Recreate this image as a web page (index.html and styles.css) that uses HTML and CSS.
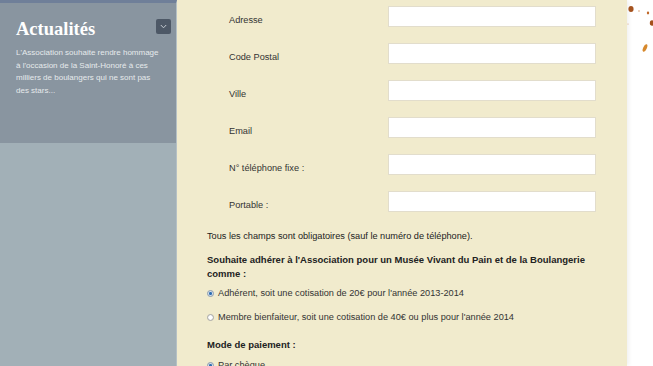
FILE: index.html
```html
<!DOCTYPE html>
<html lang="fr">
<head>
    <meta charset="UTF-8">
    <title>Adhésion - Musée Vivant du Pain</title>
    <link rel="stylesheet" href="styles.css">
</head>
<body>

<div class="page">
    <aside class="sidebar">
        <div class="news">
            <div class="news-head">
                <h2>Actualités</h2>
                <span class="toggle">
                    <svg width="7" height="5" viewBox="0 0 7 5"><path d="M0.8 1 L3.5 3.8 L6.2 1" fill="none" stroke="#c4cad1" stroke-width="1"/></svg>
                </span>
            </div>
            <p>L'Association souhaite rendre hommage à l'occasion de la Saint-Honoré à ces milliers de boulangers qui ne sont pas des stars...</p>
        </div>
    </aside>

    <div class="main">
        <div class="form-row"><label for="adresse">Adresse</label><input type="text" id="adresse"></div>
        <div class="form-row"><label for="cp">Code Postal</label><input type="text" id="cp"></div>
        <div class="form-row"><label for="ville">Ville</label><input type="text" id="ville"></div>
        <div class="form-row"><label for="email">Email</label><input type="text" id="email"></div>
        <div class="form-row"><label for="fixe">N° téléphone fixe :</label><input type="text" id="fixe"></div>
        <div class="form-row"><label for="portable">Portable :</label><input type="text" id="portable"></div>

        <p class="note">Tous les champs sont obligatoires (sauf le numéro de téléphone).</p>

        <p class="question">Souhaite adhérer à l'Association pour un Musée Vivant du Pain et de la Boulangerie comme :</p>
        <label class="choice"><input type="radio" name="type" checked> Adhérent, soit une cotisation de 20€ pour l'année 2013-2014</label>
        <label class="choice"><input type="radio" name="type"> Membre bienfaiteur, soit une cotisation de 40€ ou plus pour l'année 2014</label>

        <p class="question">Mode de paiement :</p>
        <label class="choice"><input type="radio" name="pay" checked> Par chèque</label>
    </div>

    <div class="backdrop">
        <svg width="26" height="60" viewBox="0 0 26 60">
            <ellipse cx="4" cy="9" rx="2.6" ry="3" fill="#a5531f"/>
            <ellipse cx="12" cy="11" rx="0.7" ry="0.7" fill="#d08a55"/>
            <ellipse cx="21" cy="13" rx="1.2" ry="1.4" fill="#c0692a"/>
            <ellipse cx="25" cy="23" rx="2.2" ry="2.8" fill="#a4501c"/>
            <ellipse cx="1" cy="24" rx="0.6" ry="0.6" fill="#d8a07a"/>
            <ellipse cx="18" cy="48" rx="1.8" ry="4" transform="rotate(25 18 48)" fill="#d7892d"/>
        </svg>
    </div>
</div>

</body>
</html>
```

FILE: styles.css
```css
body {
    margin: 0;
    font-family: "Liberation Sans", Arial, sans-serif;
    background-color: #fff;
}
.page {
    display: flex;
    height: 366px;
    overflow: hidden;
}
.sidebar {
    width: 176px;
    flex-shrink: 0;
    background-color: #a2b0b7;
    border-top: 3px solid #6f7f99;
    border-right: 1px solid #b6c1c6;
}
.news {
    background-color: #8995a0;
    height: 140px;
    padding: 16px 5px 0 16px;
    box-sizing: border-box;
}
.news-head {
    display: flex;
    justify-content: space-between;
    align-items: flex-start;
}
.news h2 {
    margin: 0;
    font-family: "Liberation Serif", "Times New Roman", serif;
    font-size: 18.5px;
    font-weight: bold;
    color: #fff;
    line-height: 21px;
}
.toggle {
    display: flex;
    align-items: center;
    justify-content: center;
    width: 15px;
    height: 15px;
    background-color: #4d5866;
    border-radius: 2px;
}
.news p {
    margin: 7px 0 0;
    font-size: 8px;
    line-height: 12.5px;
    color: #e6eaec;
    padding-right: 10px;
}
.main {
    width: 450px;
    flex-shrink: 0;
    background-color: #f1ebcd;
    padding: 6px 0 0 30px;
    box-sizing: border-box;
    color: #222;
    font-size: 9.2px;
    box-shadow: 2px 0 4px rgba(0,0,0,0.06);
}
.form-row {
    display: flex;
    align-items: flex-start;
    padding-left: 22px;
    margin-bottom: 16px;
}
.form-row label {
    width: 159px;
    padding-top: 8px;
    line-height: 12px;
    color: #333;
}
.form-row input {
    width: 208px;
    height: 21px;
    box-sizing: border-box;
    border: 1px solid #e2ddcc;
    background-color: #fff;
    margin: 0;
}
.note {
    margin: 18px 0 0;
    line-height: 13px;
}
.question {
    margin: 10px 0 0;
    font-size: 9.5px;
    font-weight: bold;
    line-height: 13.5px;
    width: 400px;
}
.choice + .question {
    margin-top: 14px;
}
.choice {
    display: flex;
    align-items: center;
    gap: 4px;
    margin-top: 7px;
    line-height: 13px;
    color: #333;
}
.choice + .choice {
    margin-top: 11px;
}
.choice input {
    appearance: none;
    width: 7px;
    height: 7px;
    margin: 0;
    border: 1px solid #a8a8a8;
    border-radius: 50%;
    background: radial-gradient(circle, #fff 40%, #dcdcdc 100%);
    box-sizing: border-box;
}
.choice input:checked {
    background: radial-gradient(circle, #2f6fb3 35%, #cfdbe8 50%, #e8e8e8 100%);
    border-color: #8a9bb0;
}
.backdrop {
    flex: 1;
}
.backdrop svg {
    display: block;
}
```
